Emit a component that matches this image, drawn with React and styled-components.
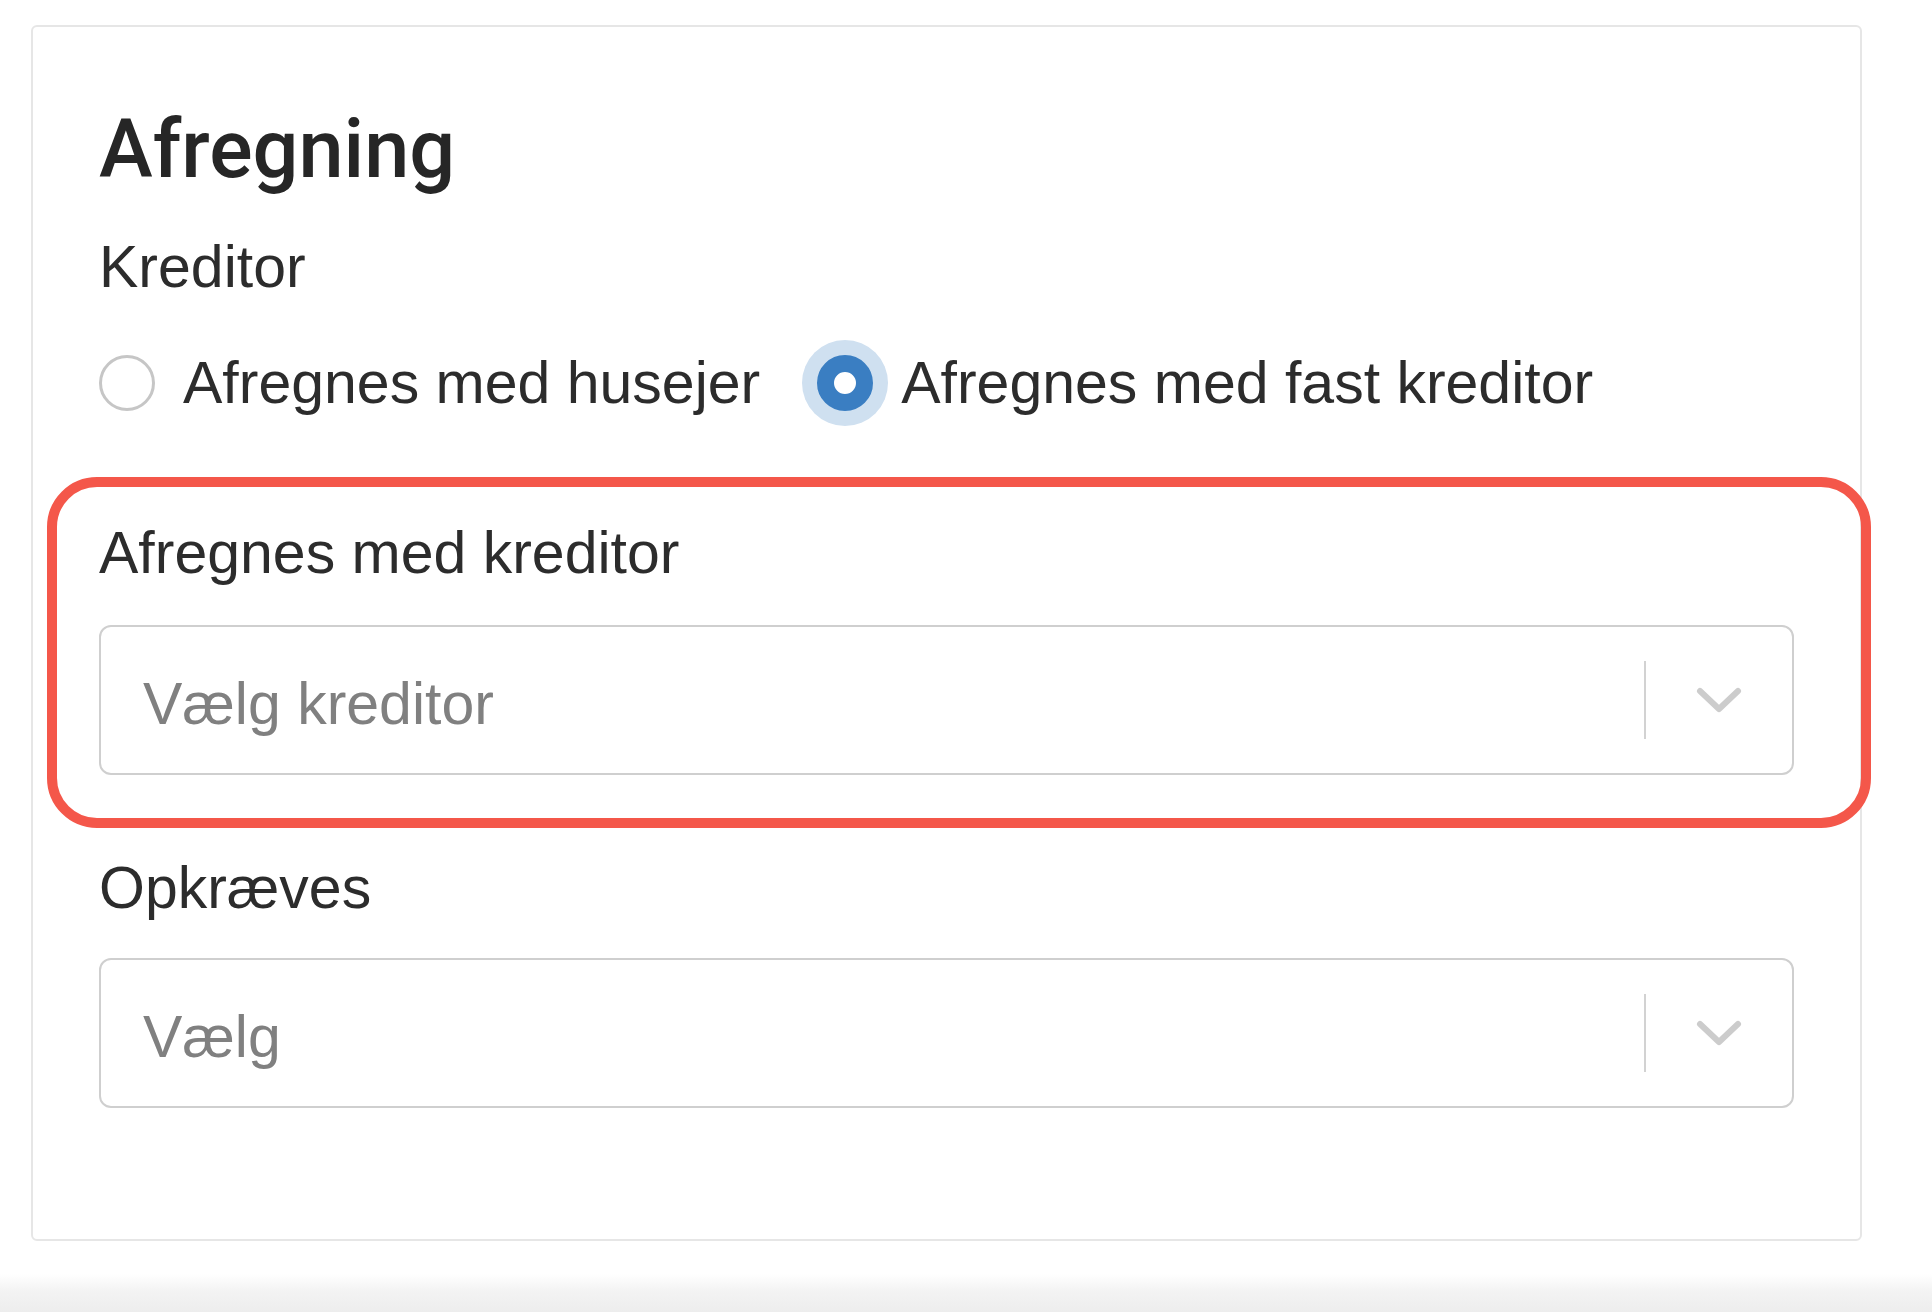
import React from "react";
import styled, { createGlobalStyle } from "styled-components";

const GlobalStyle = createGlobalStyle`
  html, body {
    margin: 0;
    padding: 0;
    background: #ffffff;
  }
  body {
    font-family: "Liberation Sans", Arial, Helvetica, sans-serif;
    color: #2b2b2b;
  }
  * { box-sizing: border-box; }
`;

const Page = styled.div`
  min-height: 1312px;
  display: flex;
  flex-direction: column;
`;

const Canvas = styled.main`
  flex: 1;
  padding: 25px 0 0 31px;
`;

const Shade = styled.div`
  height: 38px;
  background: linear-gradient(to bottom, #ffffff 0%, #f3f3f3 45%, #ededed 100%);
`;

const Card = styled.section`
  width: 1831px;
  border: 2px solid #e6e6e6;
  border-radius: 6px;
  background: #ffffff;
  padding: 78px 66px 131px;
  display: flex;
  flex-direction: column;
`;

const Title = styled.h2`
  margin: 0;
  font-family: Roboto, "Liberation Sans", Arial, sans-serif;
  font-size: 81px;
  line-height: 90px;
  font-weight: 500;
  color: #262626;
`;

const FieldLabel = styled.div`
  margin-top: ${(p) => p.$gap}px;
  font-size: 59px;
  line-height: 70px;
  color: #2c2c2c;
`;

const RadioRow = styled.div`
  margin-top: 38px;
  min-height: 86px;
  display: flex;
  align-items: center;
  gap: 57px;
`;

const RadioOption = styled.label`
  display: flex;
  align-items: center;
  gap: 28px;
  font-size: 59px;
  line-height: 70px;
  color: #2c2c2c;
`;

const RadioDot = styled.span`
  width: 56px;
  height: 56px;
  border-radius: 50%;
  flex: none;
  background: #ffffff;
  border: ${(p) => (p.$checked ? "17px solid #3a7ec2" : "3px solid #c6c6c6")};
  box-shadow: ${(p) => (p.$checked ? "0 0 0 15px #cfe0f0" : "none")};
`;

const Highlight = styled.div`
  margin: 51px -77px 0 -52px;
  border: 10px solid #f4574a;
  border-radius: 50px;
  padding: 31px 67px 43px 42px;
  display: flex;
  flex-direction: column;
`;

const SelectBox = styled.div`
  margin-top: ${(p) => p.$gap}px;
  height: 150px;
  border: 2px solid #cfcfcf;
  border-radius: 12px;
  background: #ffffff;
  display: flex;
  align-items: center;
  padding-left: 42px;
`;

const Placeholder = styled.span`
  flex: 1;
  padding-top: 8px;
  font-size: 59px;
  line-height: 70px;
  color: #808080;
`;

const Separator = styled.span`
  width: 2px;
  height: 78px;
  background: #d2d2d2;
  flex: none;
`;

const Indicator = styled.span`
  width: 146px;
  display: flex;
  align-items: center;
  justify-content: center;
  color: #cccccc;
`;

function Chevron() {
  return (
    <svg width="48" height="28" viewBox="0 0 48 28" fill="none">
      <path
        d="M5 5 L24 23 L43 5"
        stroke="currentColor"
        strokeWidth="6"
        strokeLinecap="round"
        strokeLinejoin="round"
      />
    </svg>
  );
}

function Select({ placeholder, gap }) {
  return (
    <SelectBox $gap={gap}>
      <Placeholder>{placeholder}</Placeholder>
      <Separator />
      <Indicator>
        <Chevron />
      </Indicator>
    </SelectBox>
  );
}

export default function App() {
  return (
    <>
      <GlobalStyle />
      <Page>
        <Canvas>
          <Card>
            <Title>Afregning</Title>
            <FieldLabel $gap={37}>Kreditor</FieldLabel>
            <RadioRow>
              <RadioOption>
                <RadioDot />
                Afregnes med husejer
              </RadioOption>
              <RadioOption>
                <RadioDot $checked />
                Afregnes med fast kreditor
              </RadioOption>
            </RadioRow>
            <Highlight>
              <FieldLabel $gap={0}>Afregnes med kreditor</FieldLabel>
              <Select placeholder="Vælg kreditor" gap={37} />
            </Highlight>
            <FieldLabel $gap={25}>Opkræves</FieldLabel>
            <Select placeholder="Vælg" gap={35} />
          </Card>
        </Canvas>
        <Shade />
      </Page>
    </>
  );
}
